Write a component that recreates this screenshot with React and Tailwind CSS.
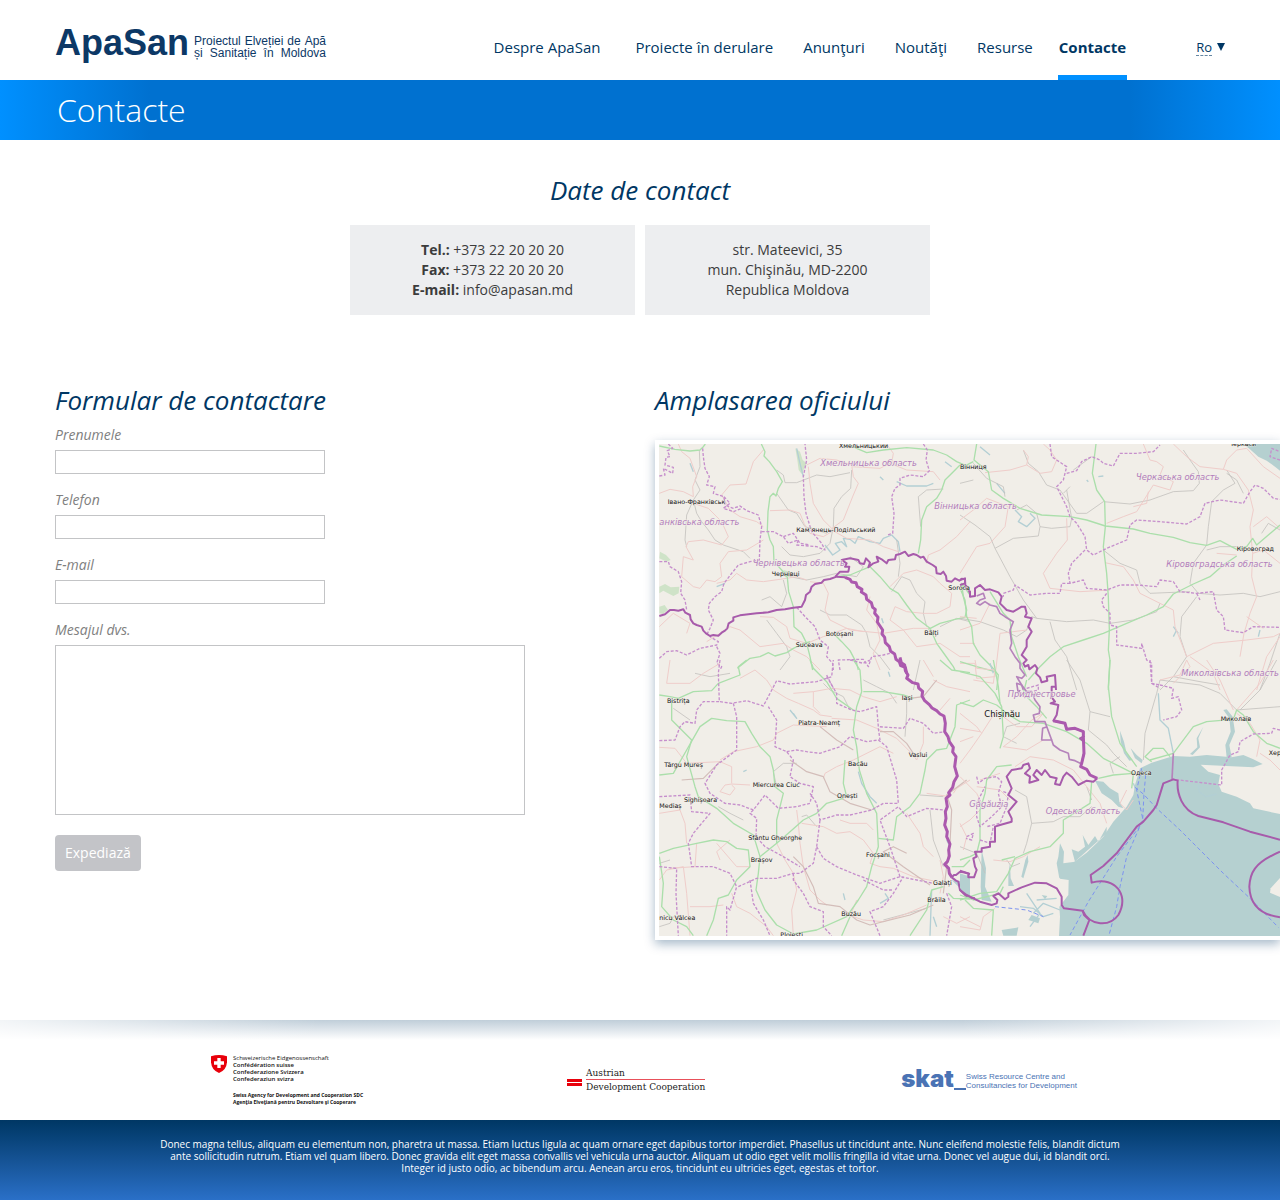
import React from 'react';

const navItems = [
  { label: 'Despre ApaSan', className: 'mr-[5px]' },
  { label: 'Proiecte în derulare' },
  { label: 'Anunţuri' },
  { label: 'Noutăţi' },
  { label: 'Resurse' },
];

const formFields = [
  { id: 'prenumele', label: 'Prenumele', type: 'text' },
  { id: 'telefon', label: 'Telefon', type: 'tel' },
  { id: 'email', label: 'E-mail', type: 'email' },
];

// The map is drawn from four tiles, each with its own origin
const mapTiles = [
  {
    id: 'nw',
    transform: 'translate(-27 -192)',
    forest: [
      'M28 620L45 612L62 622L88 620L86 640L70 648L54 640L40 632L28 640Z',
      'M28 680L44 675L54 690L38 702L28 700Z',
      'M436 205L450 215L458 240L470 250L455 282L446 270L442 240Z',
      'M30 515L48 525L62 540L50 545L28 535Z',
      'M400 570L420 575L425 590L405 592Z',
    ],
    green: [
      'M28 198L75 208L120 213L150 210L160 200L166 192',
      'M334 192L345 215L342 228L358 245L380 275L397 305L385 325L378 348L370 340L360 350L354 395L352 450L360 480L370 500L372 545L395 570L412 592L416 635L430 680L432 740L455 760L470 790L480 830L488 870',
      'M595 192L620 205L650 218L700 210L770 203L850 210L890 225L920 245L960 262',
      'M930 255L910 275L885 300L875 330L860 355L830 380L815 420L812 480L805 520',
      'M560 590L600 585L660 560L690 590L720 625L745 640L770 675L800 715L840 745L860 790L885 825L910 860L915 870',
      'M262 865L300 835L330 830L355 818L375 828L410 818L430 805L462 790L480 785',
      'M550 760L575 785L600 812L620 850L625 870',
      'M960 645L935 610L940 650L950 690L945 712L915 718L870 730L835 748',
    ],
    pink: [
      'M340 210L310 245L288 312L240 315L215 345L240 390L270 410L320 425L340 440',
      'M85 192L95 215L120 235L140 290L128 320L130 350L100 335L60 328L28 340',
      'M130 370L175 385L215 425L235 470L215 495L160 480L115 485L108 500L130 540L100 530L95 590L130 620L150 625L170 600L195 605L215 590L210 550L235 515L290 510L340 480',
      'M360 392L420 390L450 400L462 430L480 460L520 470L545 455',
      'M470 255L510 235L560 240L605 255L610 290L625 310L610 345L580 420L540 450',
      'M475 260L480 310L490 370L520 420L545 445',
      'M605 260L690 265L720 250L770 270L850 275L870 300',
      'M960 425L920 470L870 510L835 525L830 550',
      'M545 450L590 475L660 480L700 500L745 515',
      'M470 600L440 590L410 595L340 605L290 600L260 580L240 600L200 610',
      'M480 605L520 610L535 640L525 690L540 720L600 750L700 760L790 745L840 745',
      'M720 620L760 580L800 570L850 590L870 610L905 640L900 680L860 700L820 700L770 695L735 680L720 720L760 750L800 800L870 790L930 830L960 830',
      'M330 710L370 712L410 740L420 775L470 790L520 770L545 762L590 745L640 755',
      'M28 740L70 700L120 730L110 760',
      'M170 785L210 760L240 740L270 750L330 800L400 790L430 810L470 830L510 870',
      'M660 650L650 690L680 730L690 780L670 820L690 870',
      'M710 192L730 220L725 250',
    ],
    gray: [
      'M380 270L400 285L405 308L440 308L500 285L540 290L600 278',
      'M605 270L602 325L575 350L552 385L550 440L540 490',
      'M540 490L510 520L460 530L420 525L395 500',
      'M380 340L415 390L440 400L465 440L530 460',
      'M148 210L150 260L135 300L150 330L130 360L140 400L155 425L175 450L195 480L220 495L280 515L300 535',
      'M130 360L110 405L105 480L110 500',
      'M420 590L470 600L520 590L560 580L620 590L640 560L600 530',
      'M400 600L410 640L395 680L360 650L335 660',
      'M725 635L755 590L780 600L800 640L825 665L820 700L830 740',
      'M880 327L830 330L805 350L808 390L812 440',
      'M510 690L540 705L590 705L635 735L650 760L660 800L690 830L720 870',
      'M870 740L920 715L960 725',
      'M390 870L420 830L410 800L380 760L350 720',
      'M740 480L750 550L745 590',
    ],
    region: [
      'M28 288L45 285L40 265L68 280L70 262L45 255L48 232L60 230L52 212L68 205L55 192',
      'M158 205L160 230L165 265L178 290L170 315L195 320L190 340L222 350L225 375L250 385L270 378L290 392L325 405L335 440L330 480L328 540L300 545L265 555L245 580L222 610L215 635L195 650L178 670L175 690L190 720L180 745L170 765',
      'M222 350L240 370L220 385L250 395L275 385',
      'M335 455L370 455L400 470L415 490L445 480L440 495L500 500L525 510L515 490L485 455L468 400L462 350L460 290L470 240L465 192',
      'M400 470L430 460L450 490L480 495',
      'M820 192L832 210L828 240L838 272L820 290L780 285L750 295L750 315L735 325L725 350L732 400L728 460L712 465',
      'M28 545L55 545L60 560L85 575L95 605L92 640L105 660L110 690',
      'M28 835L50 815L80 812L110 825L150 805L200 795L205 785L180 770',
      'M200 800L210 820L200 850L215 860L210 870',
      'M440 682L470 715L495 740L510 780L535 800L530 830L548 850L550 870',
      'M570 870L565 840L640 838L655 860L665 830L700 825L720 820',
    ],
    river: [
      'M525 495L548 525L570 510L556 490L575 485L590 500L580 475L600 478L615 490L625 470L660 485L690 490L700 475L725 465L745 485L750 515',
      'M440 205L450 250L460 290M690 290L700 300M885 245L905 260M120 250L130 275M695 715L700 730',
      'M740 305L770 318L830 318L850 310M200 620L225 610',
    ],
    border: [
      'M28 708L45 703L60 690L72 690L85 692L100 688L106 698L120 705L122 718L130 730L140 735L155 740L160 752L168 760L180 768L190 765L205 767L215 758L225 752L232 745L236 730L250 722L250 712L270 706L320 700L355 697L380 690L405 688L430 683L455 680L465 660L468 645L480 635L485 620L495 612L515 608L522 600L540 597L560 590L585 592',
      'M556 590L570 575L595 575L598 560L585 560L590 550L575 540L600 535L625 540L630 550L642 552L648 535L660 548L655 562L670 550L685 545L680 530L695 538L710 550L715 540L735 538L738 525L750 522L765 515L775 528L790 522L800 525L812 533L820 530L830 545L848 555L858 562L860 580L872 582L880 575L888 588L890 602L905 605L915 595L928 602L935 596L945 598L946 615L955 625L960 640',
    ],
    borderHeavy: ['M585 592L600 598L605 606L618 608L622 620L636 628L634 636L648 645L650 658L664 668L668 682L676 688L674 700L684 712L682 726L690 738L698 750L696 762L704 772L706 788L718 800L722 814L734 822L738 838L748 845L752 857L766 862L770 880'],
    cities: [
      [567, 203, 'Хмельницький'], [930, 267, 'Вінниця'], [53, 373, 'Івано-Франківськ'],
      [439, 456, 'Кам’янець-Подільський'], [365, 587, 'Чернівці'], [895, 630, 'Soroca'],
      [527, 767, 'Botoșani'], [823, 764, 'Bălți'], [437, 800, 'Suceava'],
    ],
    areas: [[511, 259, 'Хмельницька область'], [28, 435, 'анківська область'], [853, 386, 'Вінницька область'], [308, 559, 'Чернівецька область']],
  },
  {
    id: 'ne',
    transform: 'translate(903 -42)',
    sea: ['M850 42L870 58L895 80L920 92L945 110L960 122V42Z'],
    green: [
      'M50 42L42 90L85 125L95 180L130 205L180 235L245 255L330 260L380 270L436 288L520 297L570 310L640 322L690 338L740 346L780 332L830 358L860 350L878 325L890 345L925 315L960 285',
      'M408 42L402 90L397 130L410 180L434 215L436 290L430 350L440 430L445 500L448 600L445 660L450 690L445 780',
      'M830 378L790 405L750 440L700 462L640 492L610 530L560 555L500 580L430 610L370 630L310 650L270 680L240 710L205 750',
      'M0 475L15 510L20 560L35 590L40 640L60 675L95 710L115 735L110 780',
      'M90 485L130 550L150 570L155 620L175 680L200 740M0 695L50 710L105 725',
      'M0 115L40 95',
    ],
    pink: [
      'M75 128L150 120L200 105L240 130L275 125L290 90L270 60L250 42',
      'M200 105L205 80L190 60M550 42L570 90L590 95L610 110L600 135L640 155L630 180L580 165L530 245L490 260L440 280',
      'M640 42L680 80L720 110L790 118L800 90L830 60L860 55L910 110L960 145',
      'M790 118L830 130L865 180L880 240L870 290L878 370L875 440L890 500L870 550L852 610L840 680',
      'M0 430L50 350L90 340L135 290L145 230L80 205L40 240L0 270',
      'M320 265L322 330L290 370L250 430L270 475L360 485L450 480',
      'M435 398L490 410L520 450L540 490L600 520L640 540L645 590L680 680L760 640L860 630L940 620L960 610',
      'M200 600L120 610L105 740L50 745L45 700L0 700M0 640L45 640M90 520L60 580L0 600',
      'M880 290L920 260L960 295M860 560L910 595M960 620L920 680L890 780M690 680L760 730L780 780',
      'M565 185L560 220L520 230M770 370L830 375M0 560L50 565M878 370L910 360L960 400',
    ],
    gray: [
      'M0 255L45 285L90 320L105 355L150 440L190 510L230 565',
      'M105 355L160 325L235 318L240 290L275 295L330 290L335 265L320 180',
      'M190 60L205 100L235 125L260 165L300 180L350 250L380 250L430 215L510 222L570 210L640 185L700 182L718 160L715 125L690 90L670 60',
      'M800 120L825 160L790 180L755 215L745 290L740 345L700 400L690 460L715 490L780 495L850 490L900 500L960 485',
      'M430 360L480 400L530 420L540 460L570 490L690 485M230 565L320 575L400 570L450 580L520 570L590 545L600 520',
      'M200 600L215 560L230 565M270 575L285 630L320 680L350 780M0 565L60 575L130 600L170 620L200 600',
      'M710 500L665 560L660 620L680 680L640 740L600 780M960 610L930 700L900 780M640 740L720 755L780 765',
      'M40 100L80 145L130 170L135 200M0 160L40 150M905 310L925 280L960 300M240 290L230 250L200 225L170 240',
      'M310 190L330 170M395 80L340 120M850 190L830 150L800 130M740 360L780 350L830 350',
    ],
    region: [
      'M270 42L275 80L290 90L320 110L310 150L290 170L320 230L330 260L350 280L375 320L380 360L400 375L440 355L500 330L510 285L530 270L600 275L680 282L720 260L735 220L780 210L850 220L870 185L885 165L910 175L940 205L960 208',
      'M320 130L350 122L365 95L395 80L420 90L430 100L460 108L480 70L530 70L580 65L600 45',
      'M375 360L335 400L325 430L330 460L370 450L380 475L440 480L480 465L530 465L590 470L600 450L640 455L660 485L710 490L760 485L770 540L790 560L795 600L850 608L880 590L960 592',
      'M330 460L305 460L300 490L260 490L210 495L165 465L160 480L130 490L130 500',
      'M440 490L425 510L430 530L450 550L450 585L470 590L470 645L545 655L545 640L560 690L575 700L575 760L600 775',
      'M960 90L930 80L935 55L960 65M710 490L720 510',
    ],
    river: [
      'M165 240L185 260L175 275L200 290L225 265L210 250M110 160L135 190M640 590L655 610M650 600L640 620',
      'M380 150L385 155M415 140L430 138M60 50L90 75M900 600L895 620',
    ],
    border: [
      'M0 450L15 445L15 460L0 465M15 470L30 485L30 500L45 498L45 485L45 475L60 465L75 480L90 478L115 487L125 500L120 520L140 540L160 545L185 530L195 530L200 550L195 560L215 565L205 590L215 605L200 630L200 650L185 675L200 690L190 700L195 710L205 705L208 718L225 705L232 715L228 730L240 742L245 757L262 752L260 740L285 735L288 780',
    ],
    borderThin: [
      'M50 498L70 490L75 505L60 510L50 520L60 525L75 515L90 525L110 530L120 550L135 560L160 575L150 600L155 640L150 655L165 680L180 700L180 715L195 735L185 745L170 740L185 765L190 780',
    ],
    cities: [[806, 47, 'Черкаси'], [830, 362, 'Кіровоград']],
    areas: [[528, 151, 'Черкаська область'], [619, 411, 'Кіровоградська область'], [664, 738, 'Миколаївська область']],
  },
  {
    id: 'sw',
    transform: 'translate(-27 648)',
    green: [
      'M28 105L60 110L85 115L130 95L185 92L205 70L270 45L265 20L290 0',
      'M28 345L70 340L110 270L130 235L150 200L185 175L230 182L285 185L305 220L330 260L360 290L370 330L375 380L400 400L390 440L380 480L380 550L330 590L325 640L318 690L345 750L380 795L430 822L500 810L590 770L625 720L650 680L665 620L685 560L680 460L650 400L628 330L620 260L610 210L620 140L635 95L630 30L610 0',
      'M65 120L65 180L125 240L110 290L135 380L145 410L200 445L250 490L310 525L330 590',
      'M28 580L70 565L140 550L190 540L230 545L260 565L295 570L300 620L260 660L235 705L205 715L190 780L170 827',
      'M28 590L40 670L35 740L70 780L110 800L130 827',
      'M380 550L415 520L460 480L500 460L530 430L580 415',
      'M480 0L490 25L530 65L560 115L610 150M640 95L700 95L760 105L790 115',
      'M585 300L580 370L590 410M685 535L730 540L740 470L780 440L810 400L825 330L830 300L860 270L890 265L915 200L920 135L960 120',
      'M575 827L600 770M780 827L830 750L845 690L880 680M895 700L910 715L960 717M905 620L940 620L960 600',
      'M870 0L905 30L960 38',
    ],
    pink: [
      'M60 0L50 70L120 70L160 40L210 10M28 262L75 265L110 310L210 305L245 320L245 370M210 300L250 275L320 260L370 240L380 220L430 195L530 200',
      'M270 55L315 30L350 60L370 90L410 115L445 130L490 150L510 165L545 170M245 375L255 385L240 405L210 395L225 375L245 372L300 375',
      'M430 100L490 95L545 85L600 90L640 110L690 125L740 110M490 95L490 140L510 160',
      'M545 175L620 180L680 205L740 235L785 280L800 300L820 250L820 200M520 355L525 340L560 320L610 300L690 260L730 280',
      'M440 450L445 490L450 550L460 620L480 690L510 720L530 735M455 490L520 500L560 520L600 515L640 540L670 580L660 610L690 620L730 625L790 650L860 665',
      'M570 480L600 490L650 490L670 510M770 460L810 520L820 560L850 590M830 400L900 410M960 360L920 385L910 400',
      'M28 660L50 630L100 620L110 700L120 827M120 740L180 740L220 735M380 550L405 600L430 640L440 690L425 750L430 827',
      'M140 550L135 620L60 625M200 550L260 620L300 620M245 700L260 740L300 760L350 800L370 827',
      'M580 760L640 780L700 785L760 765L830 735M870 700L880 650L870 600M600 770L620 720M960 770L920 790L880 770',
      'M850 60L890 80L960 95M900 115L870 150M820 0L850 50M28 460L90 450L105 490L110 550M240 540L200 575L210 600',
    ],
    road: [
      'M95 360L160 355L210 305M420 300L470 335L520 350L540 395L600 430L665 450M510 200L560 240L610 270M690 215L730 215L770 250L790 280',
      'M430 590L460 620L490 680L505 730L570 740L620 780L660 795L780 765L850 735',
      'M860 60L820 110L780 115M950 360L890 405L905 450L900 550L890 620L880 700M770 580L730 560L700 575L760 620L840 675',
    ],
    gray: [
      'M135 40L180 50L240 40M70 145L120 180M205 440L240 460L280 480M520 70L540 90L580 110L600 150',
      'M770 110L770 160L765 230M810 0L790 90M640 60L680 80L720 100L740 130M840 450L850 540L880 620',
      'M700 780L830 745M455 470L470 465L500 500M28 610L60 600M380 380L370 335L400 310L440 310',
      'M810 405L880 410M665 450L680 440M28 800L60 790L70 770',
    ],
    region: [
      'M210 0L205 40L208 125L160 125L140 150L135 190L105 185L90 200L75 240L28 242',
      'M210 125L245 130L290 122L340 138L380 62L420 72L500 65L545 50L550 0',
      'M250 130L260 170L260 270L200 315L165 370L180 400L225 430L270 435L310 450L345 405L385 445L440 440L480 430L490 380L450 370L420 350L430 300L410 275L375 260L380 180L355 140',
      'M410 275L440 270L470 275L510 280L570 260L600 230L650 245L685 240L710 260L725 310L740 360L745 430L700 430L665 450L600 465L560 465L510 480L500 430L480 400',
      'M28 410L120 405L125 455L180 460L155 490L130 520L115 550L125 620L190 620L240 640L260 680L240 750L230 740L230 827',
      'M28 620L80 625L78 700L85 827M265 680L320 655L380 655L430 640L450 640L490 610L500 560L510 480',
      'M500 560L520 595L560 620L620 645L690 670L750 650L800 660L850 670M750 650L720 560L690 480L745 440L770 470L830 445L880 450',
      'M430 640L430 660L460 700L480 740L520 755L520 800L545 827M300 660L310 730L340 780L360 827',
      'M530 50L560 100L560 130L605 150L630 155L680 140L685 200L760 205L780 175L820 190L850 220L885 215M685 205L690 240',
      'M690 827L660 755L700 740L730 700L760 650M310 450L300 460L320 475L318 530L345 560L400 590L450 620M890 700L905 740L890 827',
      'M600 0L640 10L660 0M530 45L550 85M640 660L700 690L730 690',
    ],
    river: [
      'M625 335L635 370L660 410L680 430M420 150L440 175L430 160M715 35L720 50M690 730L715 715L705 700M845 690L840 827M850 770L860 800M890 540L900 560',
      'M280 335L290 330M580 700L585 720',
    ],
    border: [
      'M905 652L912 645L918 645L930 635L940 637L960 642',
      'M905 652L918 662L925 665L930 690L950 710L958 713L975 715',
    ],
    borderHeavy: [
      'M750 -8L754 8L764 15L766 32L774 45L770 55L788 68L804 72L806 84L818 94L816 108L824 122L838 134L846 144L860 152L870 162L882 168L886 190L884 215L894 230L898 245L910 262L908 276L918 290L914 320L922 348L912 365L908 382L896 398L900 405L888 415L892 440L886 455L888 475L884 495L892 515L890 530L900 552L896 570L898 588L892 605L884 613L896 625L898 640L906 652',
    ],
    sea: ['M905 660L925 665L960 640L960 712L940 700L930 685Z'],
    cities: [
      [51, 129, 'Bistrița'], [445, 195, 'Piatra-Neamț'], [755, 119, 'Iași'], [776, 290, 'Vaslui'],
      [43, 320, 'Târgu Mureș'], [594, 317, 'Bacău'], [308, 380, 'Miercurea Ciuc'], [561, 415, 'Onești'],
      [102, 425, 'Sighișoara'], [28, 443, 'Mediaș'], [295, 540, 'Sfântu Gheorghe'], [302, 607, 'Brașov'],
      [648, 592, 'Focșani'], [849, 676, 'Galați'], [832, 727, 'Brăila'], [574, 767, 'Buzău'],
      [28, 779, 'nicu Vâlcea'], [391, 832, 'Ploiești'],
    ],
    areas: [],
  },
  {
    id: 'se',
    transform: 'translate(903 648)',
    sea: [
      'M297 828L300 770L298 740L325 705L326 660L300 656L298 640L330 615L380 578L430 530L460 485L500 440L520 405L525 375L540 325L575 308L640 288L690 290L740 285L815 292L850 285L880 298L908 312L880 322L800 318L722 314L745 335L780 345L775 372L785 395L830 410L870 430L880 445L960 462V828Z',
      'M405 362L430 365L450 385L475 400L478 425L490 445L475 440L455 420L425 400Z',
      'M480 212L492 245L500 280L518 300L508 302L492 280L482 245Z',
      'M512 265L530 285L548 300L545 310L525 295Z',
      'M730 200L715 235L720 262L698 285L690 282L712 262L710 235Z',
      'M818 170L825 215L808 255L815 292L800 292L796 255L812 215L808 175L790 150L800 148Z',
      'M65 570L78 625L75 680L95 725L65 720L62 680Z',
      'M150 610L152 655L162 678L145 678L145 640Z',
      'M203 585L205 605L190 655L184 650L196 600Z',
      'M300 550L312 575L310 610L345 605L335 568L355 575L375 560L368 525L385 555L405 528L415 545L440 500L440 520L350 600L298 655L290 610L295 590Z',
      'M0 640L30 650L28 695L0 685Z',
      'M125 810L175 802L170 827L130 827Z',
      'M215 765L240 775L235 790L205 780ZM245 705L262 708L255 718Z',
    ],
    sand: ['M932 685L962 652V712L930 698Z'],
    green: [
      'M0 128L40 140L70 120L110 135L140 160L180 185L250 190L320 215L380 250L430 295L480 320L520 340L460 345L415 355',
      'M0 35L60 50L105 100L125 140L130 230L120 265M450 0L445 80L455 170L480 250L530 320M570 300L640 280L700 200L740 185L820 178L830 150L850 165L880 215L920 250L960 265',
      'M575 305L555 290L580 265L610 265L630 290M60 540L60 450L75 400L80 360L110 320L155 315M0 720L60 700L110 695L145 640L165 595L210 575L270 560L310 520L310 480L390 430L395 365',
      'M15 720L40 745L100 750L95 827M125 600L165 590M200 60L190 100L230 140L260 175M0 600L30 590L50 580L60 540',
      'M0 705L40 720L120 700L130 680M100 0L115 80L120 130M520 345L515 385',
    ],
    pink: [
      'M0 160L50 200L65 220L30 270L0 310M65 220L110 150M0 205L60 215M130 170L170 200L215 200L250 160L215 180L170 230L130 260L200 270L250 240',
      'M60 800L0 770M0 800L60 810L70 770L105 745M0 350L50 400L70 440L30 480L0 500M150 420L120 390L50 380M165 320L210 290L280 300L340 330L380 380L420 430L440 490',
      'M740 0L780 60L820 150M940 0L900 70L830 150M830 160L870 190L900 240L890 290M680 0L660 45L600 60M960 330L930 300L900 280M500 390L480 430L500 450L520 420',
      'M0 490L20 530L10 570M60 360L120 340M100 600L150 605L190 590L240 560M0 245L40 230M40 60L100 70L105 30L50 25L45 0M680 0L690 20L640 70',
    ],
    gray: [
      'M320 0L360 60L390 155L385 210L440 255L460 280L500 320M550 300L555 220L590 100L600 60L720 75L780 100L830 150L960 140',
      'M390 155L450 170M165 390L200 410L215 490L200 550L190 580M215 490L280 485L310 470L360 470L395 440M170 250L130 230L140 200L180 190',
      'M0 560L50 580L75 640M950 0L900 90L840 150M460 340L450 310L480 290M380 380L395 420M140 600L155 620L180 610',
    ],
    region: [
      'M600 75L640 85L635 115L655 110L665 150L650 170L610 180M960 210L940 205L935 220L880 222L840 245L835 275L810 285L785 330L785 375L640 358',
      'M570 0L575 70L600 75M50 350L55 370L75 355L110 350L125 365L115 400L125 440L95 470L60 500L50 470L50 430L75 380M20 530L40 520L35 540L18 535M60 540L90 550L100 500M130 395L145 400L140 440L120 490L80 500',
      'M200 85L235 75L235 90L195 100',
    ],
    river: [
      'M595 100L600 180L625 205L640 280M90 10L100 40M180 740L220 745L250 770L280 760M230 720L290 715M200 700L240 760L210 800M520 370L528 390M300 750L250 730L220 760',
      'M715 375L718 395L738 410L770 402',
    ],
    border: [
      'M288 80L275 80L275 112L285 125L272 130L295 135L290 165L280 182L315 190L320 208L345 205L370 215L370 230L360 235L372 245L372 280L365 310M412 355L400 365L380 362L355 375L335 350L320 338L310 350L300 375L285 372L290 355L270 350L255 330L245 345L230 330L220 345L235 360L208 368L210 350L195 340L210 325L205 310L190 315L185 325L155 330L140 350L155 385L145 405L170 425L145 455L155 475L155 485L120 495L105 500L105 545L90 545L90 560L65 565L65 575L45 575L50 590L40 595L45 620L50 630L42 652L25 652L25 640L0 632',
      'M0 690L20 705L60 725L95 735L110 730L112 720L100 708L115 700L135 718L145 710L145 700L185 682L225 668L260 670L290 685L305 710L305 735L312 745L368 752L372 765L388 780L370 827',
      'M368 752C390 800 450 800 475 765C500 720 480 690 468 680C450 662 420 660 395 668L392 645L430 618L470 580L500 540L530 500L550 485L580 450L590 435L610 370L640 358L653 362C650 400 665 450 715 468L790 487L870 515L960 539',
      'M960 575C880 610 870 640 868 680C870 740 910 765 960 772',
    ],
    borderThin: [
      'M640 280L636 358',
      'M180 90L175 100L170 70L185 75L200 95L215 95L225 120L240 140L238 160L220 165L225 185L255 185L262 205L275 240L245 240L248 205L262 200M275 240L280 255L300 270L325 280L328 298L345 302L365 312',
    ],
    borderHeavy: ['M280 182L315 190L320 208L345 205L370 215L370 230L372 280L365 310L362 320L380 328L390 345L412 355'],
    ferry: ['M525 382L550 402L590 445L660 510L790 640L870 715L955 802', 'M557 345L552 400L548 480L500 590L480 680L470 740L448 822', 'M545 325L530 390L550 485L470 590L385 725L330 825', 'M105 740L200 750L250 770'],
    cities: [[513, 345, 'Одеса'], [782, 184, 'Миколаїв'], [926, 284, 'Херсон']],
    areas: [[143, 112, 'Приднестровье'], [28, 442, 'Găgăuzia'], [257, 461, 'Одеська область']],
  },
];

const MapLines = ({ paths = [], ...props }) =>
  paths.map((d) => <path key={d} d={d} fill="none" strokeLinejoin="round" {...props} />);

const OfficeMap = () => (
  <svg
    viewBox="0 0 1863 1476"
    preserveAspectRatio="xMinYMin slice"
    className="block w-full h-[492px] bg-[#f1eee8]"
    role="img"
    aria-label="Harta oficiului"
  >
    {mapTiles.map((tile) => (
      <g key={tile.id} transform={tile.transform}>
        {(tile.sea || []).map((d) => <path key={d} d={d} fill="#b5d0d0" />)}
        {(tile.sand || []).map((d) => <path key={d} d={d} fill="#f1eee8" />)}
        {(tile.forest || []).map((d) => <path key={d} d={d} fill="#cfe3c8" />)}
        <MapLines paths={tile.river} stroke="#b3cfd4" strokeWidth="4" />
        <MapLines paths={tile.gray} stroke="#c4c2be" strokeWidth="2.5" />
        <MapLines paths={tile.pink} stroke="#efcdca" strokeWidth="3" />
        <MapLines paths={tile.road} stroke="#d3bdb9" strokeWidth="3.5" />
        <MapLines paths={tile.green} stroke="#abdfab" strokeWidth="4" />
        <MapLines paths={tile.region} stroke="#c68fcc" strokeWidth="4" strokeDasharray="9 5" />
        <MapLines paths={tile.ferry} stroke="#7d93f0" strokeWidth="3" strokeDasharray="12 8" />
        <MapLines paths={tile.borderThin} stroke="#b583bb" strokeWidth="5" />
        <MapLines paths={tile.border} stroke="#a75bab" strokeWidth="6" />
        <MapLines paths={tile.borderHeavy} stroke="#ab59ae" strokeWidth="9" />
      </g>
    ))}
    {mapTiles.map((tile) => (
      <g key={tile.id} transform={tile.transform} className="font-['DejaVu_Sans',sans-serif]">
        {tile.areas.map(([x, y, name]) => (
          <text key={name} x={x} y={y} fontSize="25" fontStyle="italic" fill="#b27dbb" stroke="#f1eee8" strokeWidth="3" paintOrder="stroke">
            {name}
          </text>
        ))}
        {tile.cities.map(([x, y, name]) => (
          <text key={name} x={x} y={y} fontSize="19" fill="#111" stroke="#f1eee8" strokeWidth="2" paintOrder="stroke">
            {name}
          </text>
        ))}
      </g>
    ))}
    <text x="976" y="820" fontSize="25" fill="#111" className="font-['DejaVu_Sans',sans-serif]">Chișinău</text>
  </svg>
);

const Header = () => (
  <header className="h-20 bg-white">
    <div className="max-w-[1170px] h-full mx-auto flex justify-between">
      <a href="#" className="flex items-center gap-[5px] text-[#0c3866] font-['Liberation_Sans',Arial,sans-serif]">
        <span className="text-[36px] leading-[40px] pt-[6px] font-bold">ApaSan</span>
        <span className="w-[132px] pt-[13px] text-[12px] leading-[12px]">
          <span className="flex justify-between"><span>Proiectul</span> <span>Elveției</span> <span>de</span> <span>Apă</span></span>
          <span className="flex justify-between"><span>și</span> <span>Sanitație</span> <span>în</span> <span>Moldova</span></span>
        </span>
      </a>

      <div className="flex gap-[69px] text-[#003764]">
        <nav className="flex gap-[30px] text-[15px] leading-5">
          {navItems.map((item) => (
            <a key={item.label} href="#" className={`pt-[37px] whitespace-nowrap hover:underline ${item.className || ''}`}>
              {item.label}
            </a>
          ))}
          <a href="#" aria-current="page" className="-ml-[5px] pt-[37px] h-full border-b-[5px] border-[#0090ff] px-px font-bold">
            Contacte
          </a>
        </nav>
        <button type="button" className="self-start pt-[40px] flex gap-[5px] text-[13px] leading-4">
          <span className="border-b border-dashed border-[#003764]/60 leading-[15px]">Ro</span>
          <svg viewBox="0 0 8 8" className="w-2 h-2 mt-[3px]" fill="currentColor"><path d="M0 0h8L4 8z" /></svg>
        </button>
      </div>
    </div>
  </header>
);

const ContactCards = () => (
  <section className="pt-[30px] text-center">
    <h2 className="text-[26px] leading-10 italic text-[#003764]">Date de contact</h2>
    <div className="mt-[15px] max-w-[580px] mx-auto grid grid-cols-2 gap-[10px] text-sm leading-5 text-[#3c3c3c]">
      <div className="h-[90px] pt-[15px] bg-[#edeef0]">
        <p><strong>Tel.:</strong> +373 22 20 20 20</p>
        <p><strong>Fax:</strong> +373 22 20 20 20</p>
        <p><strong>E-mail:</strong> info@apasan.md</p>
      </div>
      <address className="h-[90px] pt-[15px] bg-[#edeef0] not-italic">
        str. Mateevici, 35<br />
        mun. Chişinău, MD-2200<br />
        Republica Moldova
      </address>
    </div>
  </section>
);

const ContactForm = () => (
  <form className="pl-[55px]" onSubmit={(e) => e.preventDefault()}>
    <h2 className="text-[26px] leading-10 italic text-[#003764]">Formular de contactare</h2>
    <div className="mt-[5px] flex flex-col gap-4 text-sm leading-5">
      {formFields.map((field) => (
        <div key={field.id}>
          <label htmlFor={field.id} className="block italic text-[#808080]">{field.label}</label>
          <input id={field.id} type={field.type} className="block mt-[5px] w-[270px] h-6 px-2 border border-[#c3c4c6] bg-white" />
        </div>
      ))}
      <div>
        <label htmlFor="mesaj" className="block italic text-[#808080]">Mesajul dvs.</label>
        <textarea id="mesaj" className="block mt-[5px] w-[470px] h-[170px] p-2 border border-[#c3c4c6] bg-white resize-none" />
      </div>
    </div>
    <button type="submit" className="mt-5 h-9 px-[10px] rounded bg-[#c3c4c8] text-white text-sm">
      Expediază
    </button>
  </form>
);

const Partners = () => (
  <section className="relative h-[100px]">
    <div className="absolute inset-x-0 top-0 h-5 bg-linear-to-b from-[#c0ced9] to-white" />
    <div className="absolute inset-x-0 top-0 h-5 bg-linear-to-r from-white/80 via-transparent via-25% to-transparent" />
    <div className="absolute inset-x-0 top-0 h-5 bg-linear-to-l from-white/80 via-transparent via-25% to-transparent" />
    <div className="relative pt-[35px] pl-[211px] pr-[203px] flex justify-between items-start">
      <a href="#" className="flex gap-[6px] text-[#111]">
        <svg viewBox="0 0 48 54" className="w-4 h-[18px] shrink-0">
          <path d="M0 4Q24-4 48 4V22Q46 46 24 54Q2 46 0 22Z" fill="#e8000b" />
          <path d="M19 9h10v10h10v10H29v10H19V29H9V19h10z" fill="#fff" />
        </svg>
        <span className="text-[6px] leading-[7px] font-semibold whitespace-nowrap">
          <span className="block font-medium">Schweizerische Eidgenossenschaft</span>
          <span className="block">Confédération suisse</span>
          <span className="block">Confederazione Svizzera</span>
          <span className="block">Confederaziun svizra</span>
          <span className="block mt-[9px] text-[5px] font-bold">Swiss Agency for Development and Cooperation SDC</span>
          <span className="block text-[5px] font-bold">Agenţia Elveţiană pentru Dezvoltare şi Cooperare</span>
        </span>
      </a>

      <a href="#" className="pl-2 mt-[11px] flex items-end gap-1 text-[#222] font-['DejaVu_Serif_Condensed','DejaVu_Serif',serif]">
        <svg viewBox="0 0 15 7" className="w-[15px] h-[7px] mb-[7px]" fill="#e8000b"><path d="M0 0h15v3H0zM0 4h15v3H0z" /></svg>
        <span className="text-[10px] leading-[13px] whitespace-nowrap">
          <span className="block border-b border-[#e8505a]">Austrian</span>
          <span className="block">Development Cooperation</span>
        </span>
      </a>

      <a href="#" className="mt-[12px] flex text-[#4a73b4]">
        <span className="text-[24px] leading-[24px] font-black font-['Inter',sans-serif]">skat</span>
        <span className="self-end w-[12px] h-[2px] mb-[1px] bg-[#4a73b4]" />
        <span className="pt-[5px] text-[8px] leading-[9px] whitespace-nowrap font-['Liberation_Sans',Arial,sans-serif]">
          <span className="block">Swiss Resource Centre and</span>
          <span className="block">Consultancies for Development</span>
        </span>
      </a>
    </div>
  </section>
);

const App = () => {
  return (
    <div className="bg-white overflow-x-hidden font-['Open_Sans','Noto_Sans',sans-serif]">
      <Header />

      <div className="h-[60px] bg-[linear-gradient(to_right,#0090ff,#0071d0_150px,#0071d0_calc(100%-150px),#0090ff)]">
        <h1 className="max-w-[1170px] mx-auto pl-[2px] text-[32px] leading-[60px] font-light text-white">Contacte</h1>
      </div>

      <main>
        <ContactCards />
        <div className="mt-[65px] mb-20 grid grid-cols-2">
          <ContactForm />
          <section className="pl-[15px]">
            <h2 className="text-[26px] leading-10 italic text-[#003764]">Amplasarea oficiului</h2>
            <div className="mt-5 border-4 border-r-0 border-white shadow-[0_4px_10px_rgba(0,55,100,0.35)]">
              <OfficeMap />
            </div>
          </section>
        </div>
        <Partners />
      </main>

      <footer className="h-20 pt-[18px] bg-linear-to-b from-[#003764] to-[#2a70c8] text-center text-[10px] leading-[12px] text-white">
        <p>Donec magna tellus, aliquam eu elementum non, pharetra ut massa. Etiam luctus ligula ac quam ornare eget dapibus tortor imperdiet. Phasellus ut tincidunt ante. Nunc eleifend molestie felis, blandit dictum</p>
        <p>ante sollicitudin rutrum. Etiam vel quam libero. Donec gravida elit eget massa convallis vel vehicula urna auctor. Aliquam ut odio eget velit mollis fringilla id vitae urna. Donec vel augue dui, id blandit orci.</p>
        <p>Integer id justo odio, ac bibendum arcu. Aenean arcu eros, tincidunt eu ultricies eget, egestas et tortor.</p>
      </footer>
    </div>
  );
};

export default App;
